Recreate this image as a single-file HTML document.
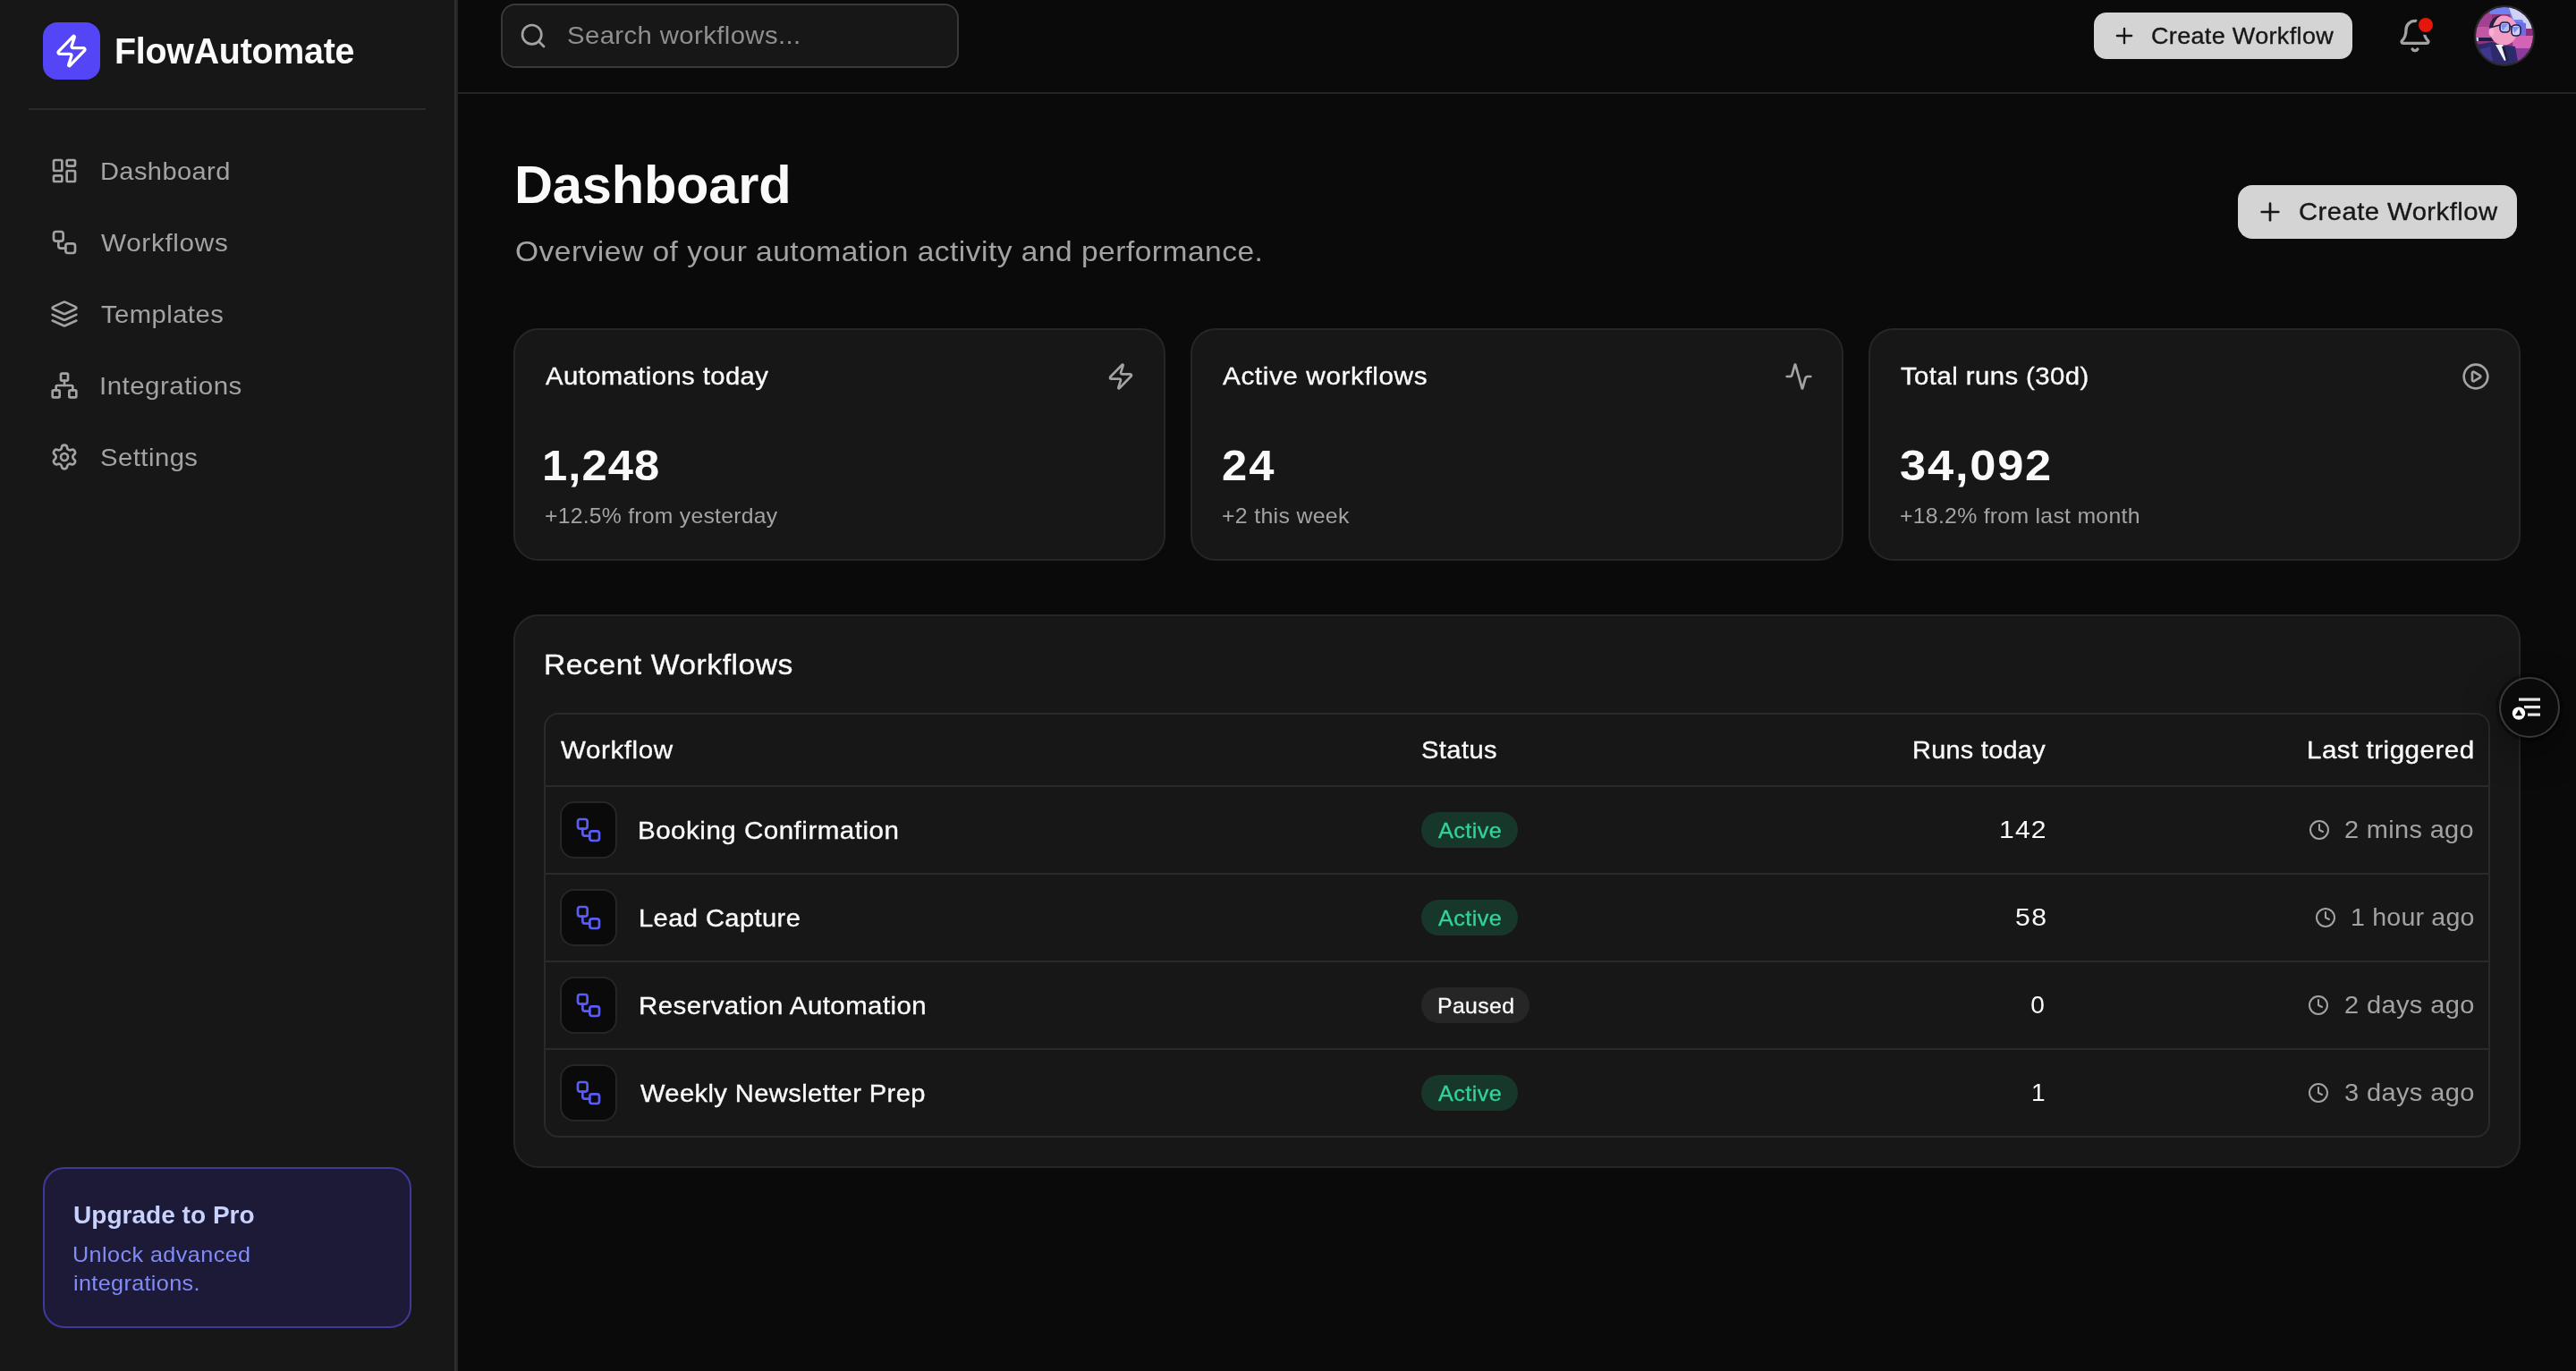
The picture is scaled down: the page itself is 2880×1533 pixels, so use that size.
<!DOCTYPE html>
<html><head><meta charset="utf-8"><title>FlowAutomate Dashboard</title>
<style>
html,body{margin:0;padding:0;}
body{width:2880px;height:1533px;overflow:hidden;background:#0a0a0a;position:relative;font-family:"Liberation Sans",sans-serif;}
.t{position:absolute;white-space:nowrap;}
.b{position:absolute;}
.i{position:absolute;overflow:visible;}
#root{transform-origin:0 0;}
@media (max-width:1600px){#root{transform:scale(0.5);}}
</style></head><body><div id="root" style="position:absolute;left:0;top:0;width:2880px;height:1533px;background:#0a0a0a;will-change:transform;overflow:hidden">
<div class="b" style="left:0px;top:0px;width:508px;height:1533px;background:#171717;border-radius:0px;"></div>
<div class="b" style="left:508px;top:0px;width:2px;height:1533px;background:#303030;border-radius:0px;"></div>
<div class="b" style="left:510px;top:0px;width:2px;height:1533px;background:#242424;border-radius:0px;"></div>
<div class="b" style="left:48px;top:25px;width:64px;height:64px;background:#5445f6;border-radius:16px;"></div>
<svg class="i" style="left:60px;top:37px;" width="40" height="40" viewBox="0 0 24 24" fill="none" stroke="#ffffff" stroke-width="2" stroke-linecap="round" stroke-linejoin="round"><path d="M4 14a1 1 0 0 1-.78-1.63l9.9-10.2a.5.5 0 0 1 .86.46l-1.92 6.02A1 1 0 0 0 13 10h7a1 1 0 0 1 .78 1.63l-9.9 10.2a.5.5 0 0 1-.86-.46l1.92-6.02A1 1 0 0 0 11 14z"/></svg>
<div class="t" style="left:128.03px;top:37.14px;font-size:40px;line-height:40px;color:#fafafa;font-weight:700;letter-spacing:-0.259px;transform:scaleX(0.9846);transform-origin:0 0;">FlowAutomate</div>
<div class="b" style="left:32px;top:121px;width:444px;height:2px;background:#2a2a2a;border-radius:0px;"></div>
<svg class="i" style="left:56px;top:175px;" width="32" height="32" viewBox="0 0 24 24" fill="none" stroke="#a3a3a3" stroke-width="2" stroke-linecap="round" stroke-linejoin="round"><rect width="7" height="9" x="3" y="3" rx="1"/><rect width="7" height="5" x="14" y="3" rx="1"/><rect width="7" height="9" x="14" y="12" rx="1"/><rect width="7" height="5" x="3" y="16" rx="1"/></svg>
<div class="t" style="left:111.83px;top:177.80px;font-size:28px;line-height:28px;color:#a3a3a3;letter-spacing:0.395px;transform:scaleX(1.0367);transform-origin:0 0;">Dashboard</div>
<svg class="i" style="left:56px;top:255px;" width="32" height="32" viewBox="0 0 24 24" fill="none" stroke="#a3a3a3" stroke-width="2" stroke-linecap="round" stroke-linejoin="round"><rect width="8" height="8" x="3" y="3" rx="2"/><path d="M7 11v4a2 2 0 0 0 2 2h4"/><rect width="8" height="8" x="13" y="13" rx="2"/></svg>
<div class="t" style="left:112.60px;top:257.80px;font-size:28px;line-height:28px;color:#a3a3a3;letter-spacing:0.617px;transform:scaleX(1.0614);transform-origin:0 0;">Workflows</div>
<svg class="i" style="left:56px;top:335px;" width="32" height="32" viewBox="0 0 24 24" fill="none" stroke="#a3a3a3" stroke-width="2" stroke-linecap="round" stroke-linejoin="round"><path d="m12.83 2.18a2 2 0 0 0-1.66 0L2.6 6.08a1 1 0 0 0 0 1.83l8.58 3.91a2 2 0 0 0 1.66 0l8.58-3.9a1 1 0 0 0 0-1.83Z"/><path d="m22 17.65-9.17 4.16a2 2 0 0 1-1.66 0L2 17.65"/><path d="m22 12.65-9.17 4.16a2 2 0 0 1-1.66 0L2 12.65"/></svg>
<div class="t" style="left:113.10px;top:337.80px;font-size:28px;line-height:28px;color:#a3a3a3;letter-spacing:0.436px;transform:scaleX(1.0430);transform-origin:0 0;">Templates</div>
<svg class="i" style="left:56px;top:415px;" width="32" height="32" viewBox="0 0 24 24" fill="none" stroke="#a3a3a3" stroke-width="2" stroke-linecap="round" stroke-linejoin="round"><rect x="16" y="16" width="6" height="6" rx="1"/><rect x="2" y="16" width="6" height="6" rx="1"/><rect x="9" y="2" width="6" height="6" rx="1"/><path d="M5 16v-3a1 1 0 0 1 1-1h12a1 1 0 0 1 1 1v3"/><path d="M12 12V8"/></svg>
<div class="t" style="left:111.49px;top:417.80px;font-size:28px;line-height:28px;color:#a3a3a3;letter-spacing:0.445px;transform:scaleX(1.0537);transform-origin:0 0;">Integrations</div>
<svg class="i" style="left:56px;top:495px;" width="32" height="32" viewBox="0 0 24 24" fill="none" stroke="#a3a3a3" stroke-width="2" stroke-linecap="round" stroke-linejoin="round"><path d="M9.671 4.136a2.34 2.34 0 0 1 4.659 0 2.34 2.34 0 0 0 3.319 1.915 2.34 2.34 0 0 1 2.33 4.033 2.34 2.34 0 0 0 0 3.831 2.34 2.34 0 0 1-2.33 4.033 2.34 2.34 0 0 0-3.319 1.915 2.34 2.34 0 0 1-4.659 0 2.34 2.34 0 0 0-3.32-1.915 2.34 2.34 0 0 1-2.33-4.033 2.34 2.34 0 0 0 0-3.831A2.34 2.34 0 0 1 6.35 6.051a2.34 2.34 0 0 0 3.319-1.915"/><circle cx="12" cy="12" r="3"/></svg>
<div class="t" style="left:112.05px;top:497.80px;font-size:28px;line-height:28px;color:#a3a3a3;letter-spacing:0.426px;transform:scaleX(1.0468);transform-origin:0 0;">Settings</div>
<div class="b" style="left:48px;top:1305px;width:412px;height:180px;background:#1c1a36;border-radius:24px;border:2px solid #3d3a9a;box-sizing:border-box;"></div>
<div class="t" style="left:81.80px;top:1345.30px;font-size:28px;line-height:28px;color:#c7d2fe;font-weight:700;letter-spacing:0.012px;transform:scaleX(1.0012);transform-origin:0 0;">Upgrade to Pro</div>
<div class="t" style="left:80.70px;top:1390.88px;font-size:24px;line-height:24px;color:#818cf8;letter-spacing:0.403px;transform:scaleX(1.0491);transform-origin:0 0;">Unlock advanced</div>
<div class="t" style="left:81.75px;top:1422.88px;font-size:24px;line-height:24px;color:#818cf8;letter-spacing:0.337px;transform:scaleX(1.0497);transform-origin:0 0;">integrations.</div>
<div class="b" style="left:512px;top:103px;width:2368px;height:2px;background:#242424;border-radius:0px;"></div>
<div class="b" style="left:560px;top:4px;width:512px;height:72px;background:#171717;border-radius:16px;border:2px solid #383838;box-sizing:border-box;"></div>
<svg class="i" style="left:580px;top:24px;" width="32" height="32" viewBox="0 0 24 24" fill="none" stroke="#a3a3a3" stroke-width="2" stroke-linecap="round" stroke-linejoin="round"><circle cx="11" cy="11" r="8"/><path d="m21 21-4.3-4.3"/></svg>
<div class="t" style="left:634.35px;top:26.30px;font-size:28px;line-height:28px;color:#8f8f8f;letter-spacing:0.389px;transform:scaleX(1.0458);transform-origin:0 0;">Search workflows...</div>
<div class="b" style="left:2341px;top:14px;width:289px;height:52px;background:#d4d4d4;border-radius:14px;"></div>
<svg class="i" style="left:2361px;top:26px;" width="28" height="28" viewBox="0 0 24 24" fill="none" stroke="#171717" stroke-width="2" stroke-linecap="round" stroke-linejoin="round"><path d="M5 12h14"/><path d="M12 5v14"/></svg>
<div class="t" style="left:2404.96px;top:27.09px;font-size:26px;line-height:26px;color:#171717;letter-spacing:0.330px;transform:scaleX(1.0377);transform-origin:0 0;-webkit-text-stroke:0.35px #171717;">Create Workflow</div>
<svg class="i" style="left:2680px;top:20px;" width="40" height="40" viewBox="0 0 24 24" fill="none" stroke="#a3a3a3" stroke-width="2" stroke-linecap="round" stroke-linejoin="round"><path d="M10.268 21a2 2 0 0 0 3.464 0"/><path d="M3.262 15.326A1 1 0 0 0 4 17h16a1 1 0 0 0 .74-1.673C19.41 13.956 18 12.499 18 8A6 6 0 0 0 6 8c0 4.499-1.411 5.956-2.738 7.326"/></svg>
<div class="b" style="left:2701px;top:17px;width:22px;height:22px;background:#e5170d;border-radius:11px;border:3px solid #0a0a0a;box-sizing:border-box;"></div>
<svg class="i" style="left:2766px;top:6px" width="68" height="68" viewBox="0 0 68 68"><defs><clipPath id="av"><circle cx="34" cy="34" r="32"/></clipPath></defs><g clip-path="url(#av)"><rect width="68" height="68" fill="#8e3582"/><rect x="0" y="6" width="20" height="18" fill="#a2418f"/><rect x="0" y="24" width="20" height="12" fill="#c257a6"/><path d="M16 0 H68 V22 H44 L40 10 H18Z" fill="#7080ef"/><path d="M38 0 H68 V30 H60 L54 16 H44Z" fill="#cfd2f2"/><path d="M46 18 L58 20 V36 H46Z" fill="#6d6ee6"/><rect x="58" y="26" width="10" height="16" fill="#8a2f7e"/><path d="M42 34 H66 V50 H44Z" fill="#d563b5"/><path d="M44 48 H64 V64 H46Z" fill="#8d3a9c"/><path d="M0 68 L2 44 L20 41 L30 44 L46 46 L50 68Z" fill="#2d2a6c"/><path d="M4 50 L18 46 L22 68 L8 68Z" fill="#3d3790"/><rect x="0" y="36" width="22" height="4" fill="#1d1d44"/><rect x="0" y="36" width="5" height="4" fill="#c8c8e0"/><ellipse cx="33" cy="28" rx="15.5" ry="16.5" fill="#f19dc4"/><ellipse cx="19.5" cy="30" rx="3" ry="4.5" fill="#f5b0d0"/><path d="M17 24 Q19 12 31 11 Q24 14 21 24Z" fill="#2a1f3e"/><path d="M24 44 L34 62 L38 60 L32 44Z" fill="#f2f2f2"/><path d="M31 46 L36 62 L38.5 61 L34 46Z" fill="#1c1c40"/><rect x="29" y="19" width="11" height="11" rx="4" fill="#b8c0f4" stroke="#1c1f4a" stroke-width="1.6"/><path d="M30 21 L38 21 L32 28Z" fill="#7d8ef0"/><rect x="42" y="22" width="10" height="12" rx="4" fill="#d0d4f6" stroke="#1c1f4a" stroke-width="1.6"/><path d="M43 24 L51 24 L45 31Z" fill="#8090f0"/><path d="M40 23 L42 24 M29 22 L17 25" stroke="#1c1f4a" stroke-width="1.6" fill="none"/></g><circle cx="34" cy="34" r="33" fill="none" stroke="#2a2a2a" stroke-width="2"/></svg>
<div class="t" style="left:574.83px;top:176.51px;font-size:60px;line-height:60px;color:#fafafa;font-weight:700;letter-spacing:-0.186px;transform:scaleX(0.9927);transform-origin:0 0;">Dashboard</div>
<div class="t" style="left:575.95px;top:265.11px;font-size:32px;line-height:32px;color:#a3a3a3;letter-spacing:0.455px;transform:scaleX(1.0483);transform-origin:0 0;">Overview of your automation activity and performance.</div>
<div class="b" style="left:2502px;top:207px;width:312px;height:60px;background:#d4d4d4;border-radius:16px;"></div>
<svg class="i" style="left:2522px;top:221px;" width="32" height="32" viewBox="0 0 24 24" fill="none" stroke="#171717" stroke-width="2" stroke-linecap="round" stroke-linejoin="round"><path d="M5 12h14"/><path d="M12 5v14"/></svg>
<div class="t" style="left:2569.75px;top:223.40px;font-size:28px;line-height:28px;color:#171717;letter-spacing:0.426px;transform:scaleX(1.0454);transform-origin:0 0;-webkit-text-stroke:0.35px #171717;">Create Workflow</div>
<div class="b" style="left:574px;top:367px;width:729px;height:260px;background:#171717;border-radius:28px;border:2px solid #262626;box-sizing:border-box;"></div>
<div class="t" style="left:609.60px;top:407.40px;font-size:28px;line-height:28px;color:#fafafa;letter-spacing:0.407px;transform:scaleX(1.0440);transform-origin:0 0;-webkit-text-stroke:0.35px #fafafa;">Automations today</div>
<svg class="i" style="left:1237px;top:405px;" width="32" height="32" viewBox="0 0 24 24" fill="none" stroke="#a3a3a3" stroke-width="2" stroke-linecap="round" stroke-linejoin="round"><path d="M4 14a1 1 0 0 1-.78-1.63l9.9-10.2a.5.5 0 0 1 .86.46l-1.92 6.02A1 1 0 0 0 13 10h7a1 1 0 0 1 .78 1.63l-9.9 10.2a.5.5 0 0 1-.86-.46l1.92-6.02A1 1 0 0 0 11 14z"/></svg>
<div class="t" style="left:606.43px;top:497.37px;font-size:48px;line-height:48px;color:#fafafa;font-weight:700;letter-spacing:1.032px;transform:scaleX(1.0564);transform-origin:0 0;">1,248</div>
<div class="t" style="left:608.57px;top:564.88px;font-size:24px;line-height:24px;color:#a3a3a3;letter-spacing:0.245px;transform:scaleX(1.0306);transform-origin:0 0;">+12.5% from yesterday</div>
<div class="b" style="left:1331px;top:367px;width:730px;height:260px;background:#171717;border-radius:28px;border:2px solid #262626;box-sizing:border-box;"></div>
<div class="t" style="left:1366.60px;top:407.40px;font-size:28px;line-height:28px;color:#fafafa;letter-spacing:0.542px;transform:scaleX(1.0626);transform-origin:0 0;-webkit-text-stroke:0.35px #fafafa;">Active workflows</div>
<svg class="i" style="left:1995px;top:405px;" width="32" height="32" viewBox="0 0 24 24" fill="none" stroke="#a3a3a3" stroke-width="2" stroke-linecap="round" stroke-linejoin="round"><path d="M22 12h-2.48a2 2 0 0 0-1.93 1.46l-2.35 8.36a.25.25 0 0 1-.48 0L9.24 2.18a.25.25 0 0 0-.48 0l-2.35 8.36A2 2 0 0 1 4.49 12H2"/></svg>
<div class="t" style="left:1365.54px;top:497.37px;font-size:48px;line-height:48px;color:#fafafa;font-weight:700;letter-spacing:1.857px;transform:scaleX(1.0555);transform-origin:0 0;">24</div>
<div class="t" style="left:1365.56px;top:564.88px;font-size:24px;line-height:24px;color:#a3a3a3;letter-spacing:0.291px;transform:scaleX(1.0374);transform-origin:0 0;">+2 this week</div>
<div class="b" style="left:2089px;top:367px;width:729px;height:260px;background:#171717;border-radius:28px;border:2px solid #262626;box-sizing:border-box;"></div>
<div class="t" style="left:2124.60px;top:407.40px;font-size:28px;line-height:28px;color:#fafafa;letter-spacing:0.399px;transform:scaleX(1.0486);transform-origin:0 0;-webkit-text-stroke:0.35px #fafafa;">Total runs (30d)</div>
<svg class="i" style="left:2752px;top:405px;" width="32" height="32" viewBox="0 0 24 24" fill="none" stroke="#a3a3a3" stroke-width="2" stroke-linecap="round" stroke-linejoin="round"><path d="M9 9.003a1 1 0 0 1 1.517-.859l4.997 2.997a1 1 0 0 1 0 1.718l-4.997 2.997A1 1 0 0 1 9 14.996z"/><circle cx="12" cy="12" r="10"/></svg>
<div class="t" style="left:2123.51px;top:497.37px;font-size:48px;line-height:48px;color:#fafafa;font-weight:700;letter-spacing:1.626px;transform:scaleX(1.0925);transform-origin:0 0;">34,092</div>
<div class="t" style="left:2123.57px;top:564.88px;font-size:24px;line-height:24px;color:#a3a3a3;letter-spacing:0.263px;transform:scaleX(1.0340);transform-origin:0 0;">+18.2% from last month</div>
<div class="b" style="left:574px;top:687px;width:2244px;height:619px;background:#171717;border-radius:28px;border:2px solid #262626;box-sizing:border-box;"></div>
<div class="t" style="left:607.90px;top:727.01px;font-size:32px;line-height:32px;color:#fafafa;letter-spacing:0.534px;transform:scaleX(1.0494);transform-origin:0 0;-webkit-text-stroke:0.35px #fafafa;">Recent Workflows</div>
<div class="b" style="left:608px;top:797px;width:2176px;height:475px;background:transparent;border-radius:16px;border:2px solid #2a2a2a;box-sizing:border-box;"></div>
<div class="t" style="left:627.20px;top:825.10px;font-size:28px;line-height:28px;color:#fafafa;letter-spacing:0.569px;transform:scaleX(1.0548);transform-origin:0 0;-webkit-text-stroke:0.35px #fafafa;">Workflow</div>
<div class="t" style="left:1588.86px;top:825.10px;font-size:28px;line-height:28px;color:#fafafa;letter-spacing:0.393px;transform:scaleX(1.0392);transform-origin:0 0;-webkit-text-stroke:0.35px #fafafa;">Status</div>
<div class="t" style="left:2138.04px;top:825.10px;font-size:28px;line-height:28px;color:#fafafa;letter-spacing:0.298px;transform:scaleX(1.0296);transform-origin:0 0;-webkit-text-stroke:0.35px #fafafa;">Runs today</div>
<div class="t" style="left:2579.09px;top:825.10px;font-size:28px;line-height:28px;color:#fafafa;letter-spacing:0.460px;transform:scaleX(1.0564);transform-origin:0 0;-webkit-text-stroke:0.35px #fafafa;">Last triggered</div>
<div class="b" style="left:610px;top:878px;width:2172px;height:2px;background:#2a2a2a;border-radius:0px;"></div>
<div class="b" style="left:610px;top:976px;width:2172px;height:2px;background:#2a2a2a;border-radius:0px;"></div>
<div class="b" style="left:626px;top:896px;width:64px;height:64px;background:#0a0a0a;border-radius:16px;border:2px solid #262626;box-sizing:border-box;"></div>
<svg class="i" style="left:642px;top:912px;" width="32" height="32" viewBox="0 0 24 24" fill="none" stroke="#5b5cf6" stroke-width="2" stroke-linecap="round" stroke-linejoin="round"><rect width="8" height="8" x="3" y="3" rx="2"/><path d="M7 11v4a2 2 0 0 0 2 2h4"/><rect width="8" height="8" x="13" y="13" rx="2"/></svg>
<div class="t" style="left:713.49px;top:914.60px;font-size:28px;line-height:28px;color:#fafafa;letter-spacing:0.479px;transform:scaleX(1.0545);transform-origin:0 0;-webkit-text-stroke:0.35px #fafafa;">Booking Confirmation</div>
<div class="b" style="left:1589px;top:908px;width:108px;height:40px;background:#17372b;border-radius:20px;"></div>
<div class="t" style="left:1607.80px;top:916.88px;font-size:24px;line-height:24px;color:#34d399;letter-spacing:0.411px;transform:scaleX(1.0498);transform-origin:0 0;-webkit-text-stroke:0.3px #34d399;">Active</div>
<div class="t" style="left:2234.75px;top:914.30px;font-size:28px;line-height:28px;color:#fafafa;letter-spacing:1.041px;transform:scaleX(1.0764);transform-origin:0 0;">142</div>
<div class="t" style="left:2621.37px;top:914.30px;font-size:28px;line-height:28px;color:#a3a3a3;letter-spacing:0.327px;transform:scaleX(1.0338);transform-origin:0 0;">2 mins ago</div>
<svg class="i" style="left:2580.9px;top:916px;" width="24" height="24" viewBox="0 0 24 24" fill="none" stroke="#a3a3a3" stroke-width="2" stroke-linecap="round" stroke-linejoin="round"><path d="M12 6v6l4 2"/><circle cx="12" cy="12" r="10"/></svg>
<div class="b" style="left:610px;top:1074px;width:2172px;height:2px;background:#2a2a2a;border-radius:0px;"></div>
<div class="b" style="left:626px;top:994px;width:64px;height:64px;background:#0a0a0a;border-radius:16px;border:2px solid #262626;box-sizing:border-box;"></div>
<svg class="i" style="left:642px;top:1010px;" width="32" height="32" viewBox="0 0 24 24" fill="none" stroke="#5b5cf6" stroke-width="2" stroke-linecap="round" stroke-linejoin="round"><rect width="8" height="8" x="3" y="3" rx="2"/><path d="M7 11v4a2 2 0 0 0 2 2h4"/><rect width="8" height="8" x="13" y="13" rx="2"/></svg>
<div class="t" style="left:713.52px;top:1012.60px;font-size:28px;line-height:28px;color:#fafafa;letter-spacing:0.388px;transform:scaleX(1.0399);transform-origin:0 0;-webkit-text-stroke:0.35px #fafafa;">Lead Capture</div>
<div class="b" style="left:1589px;top:1006px;width:108px;height:40px;background:#17372b;border-radius:20px;"></div>
<div class="t" style="left:1607.80px;top:1014.88px;font-size:24px;line-height:24px;color:#34d399;letter-spacing:0.411px;transform:scaleX(1.0498);transform-origin:0 0;-webkit-text-stroke:0.3px #34d399;">Active</div>
<div class="t" style="left:2252.62px;top:1012.30px;font-size:28px;line-height:28px;color:#fafafa;letter-spacing:1.409px;transform:scaleX(1.0786);transform-origin:0 0;">58</div>
<div class="t" style="left:2627.56px;top:1012.30px;font-size:28px;line-height:28px;color:#a3a3a3;letter-spacing:0.192px;transform:scaleX(1.0202);transform-origin:0 0;">1 hour ago</div>
<svg class="i" style="left:2588.1px;top:1014px;" width="24" height="24" viewBox="0 0 24 24" fill="none" stroke="#a3a3a3" stroke-width="2" stroke-linecap="round" stroke-linejoin="round"><path d="M12 6v6l4 2"/><circle cx="12" cy="12" r="10"/></svg>
<div class="b" style="left:610px;top:1172px;width:2172px;height:2px;background:#2a2a2a;border-radius:0px;"></div>
<div class="b" style="left:626px;top:1092px;width:64px;height:64px;background:#0a0a0a;border-radius:16px;border:2px solid #262626;box-sizing:border-box;"></div>
<svg class="i" style="left:642px;top:1108px;" width="32" height="32" viewBox="0 0 24 24" fill="none" stroke="#5b5cf6" stroke-width="2" stroke-linecap="round" stroke-linejoin="round"><rect width="8" height="8" x="3" y="3" rx="2"/><path d="M7 11v4a2 2 0 0 0 2 2h4"/><rect width="8" height="8" x="13" y="13" rx="2"/></svg>
<div class="t" style="left:713.50px;top:1110.60px;font-size:28px;line-height:28px;color:#fafafa;letter-spacing:0.439px;transform:scaleX(1.0494);transform-origin:0 0;-webkit-text-stroke:0.35px #fafafa;">Reservation Automation</div>
<div class="b" style="left:1589px;top:1104px;width:121px;height:40px;background:#262626;border-radius:20px;"></div>
<div class="t" style="left:1606.77px;top:1112.88px;font-size:24px;line-height:24px;color:#fafafa;letter-spacing:0.348px;transform:scaleX(1.0342);transform-origin:0 0;-webkit-text-stroke:0.3px #fafafa;">Paused</div>
<div class="t" style="left:2270.20px;top:1110.30px;font-size:28px;line-height:28px;color:#fafafa;">0</div>
<div class="t" style="left:2620.66px;top:1110.30px;font-size:28px;line-height:28px;color:#a3a3a3;letter-spacing:0.356px;transform:scaleX(1.0369);transform-origin:0 0;">2 days ago</div>
<svg class="i" style="left:2580.2px;top:1112px;" width="24" height="24" viewBox="0 0 24 24" fill="none" stroke="#a3a3a3" stroke-width="2" stroke-linecap="round" stroke-linejoin="round"><path d="M12 6v6l4 2"/><circle cx="12" cy="12" r="10"/></svg>
<div class="b" style="left:626px;top:1190px;width:64px;height:64px;background:#0a0a0a;border-radius:16px;border:2px solid #262626;box-sizing:border-box;"></div>
<svg class="i" style="left:642px;top:1206px;" width="32" height="32" viewBox="0 0 24 24" fill="none" stroke="#5b5cf6" stroke-width="2" stroke-linecap="round" stroke-linejoin="round"><rect width="8" height="8" x="3" y="3" rx="2"/><path d="M7 11v4a2 2 0 0 0 2 2h4"/><rect width="8" height="8" x="13" y="13" rx="2"/></svg>
<div class="t" style="left:715.60px;top:1208.60px;font-size:28px;line-height:28px;color:#fafafa;letter-spacing:0.370px;transform:scaleX(1.0407);transform-origin:0 0;-webkit-text-stroke:0.35px #fafafa;">Weekly Newsletter Prep</div>
<div class="b" style="left:1589px;top:1202px;width:108px;height:40px;background:#17372b;border-radius:20px;"></div>
<div class="t" style="left:1607.80px;top:1210.88px;font-size:24px;line-height:24px;color:#34d399;letter-spacing:0.411px;transform:scaleX(1.0498);transform-origin:0 0;-webkit-text-stroke:0.3px #34d399;">Active</div>
<div class="t" style="left:2271.10px;top:1208.30px;font-size:28px;line-height:28px;color:#fafafa;">1</div>
<div class="t" style="left:2620.66px;top:1208.30px;font-size:28px;line-height:28px;color:#a3a3a3;letter-spacing:0.356px;transform:scaleX(1.0369);transform-origin:0 0;">3 days ago</div>
<svg class="i" style="left:2580.2px;top:1210px;" width="24" height="24" viewBox="0 0 24 24" fill="none" stroke="#a3a3a3" stroke-width="2" stroke-linecap="round" stroke-linejoin="round"><path d="M12 6v6l4 2"/><circle cx="12" cy="12" r="10"/></svg>
<div class="b" style="left:2794px;top:757px;width:68px;height:68px;background:#0a0a0a;border-radius:34px;border:2px solid #3a3a3a;box-sizing:border-box;box-shadow:0 0 0 4px rgba(0,0,0,0.3),0 14px 44px rgba(0,0,0,0.42);"></div>
<svg class="i" style="left:2794px;top:757px" width="68" height="68" viewBox="0 0 68 68"><rect x="22" y="23.5" width="24" height="3.2" fill="#e5e5e5"/><rect x="28" y="32" width="18" height="3.2" fill="#e5e5e5"/><rect x="32" y="40.5" width="14" height="3.2" fill="#e5e5e5"/><circle cx="22" cy="40.6" r="8.5" fill="#0a0a0a"/><circle cx="22" cy="40.6" r="7.2" fill="#ffffff"/><path d="M22 36.2 L26 43.2 L18 43.2Z" fill="#0a0a0a"/></svg>
</div></body></html>
